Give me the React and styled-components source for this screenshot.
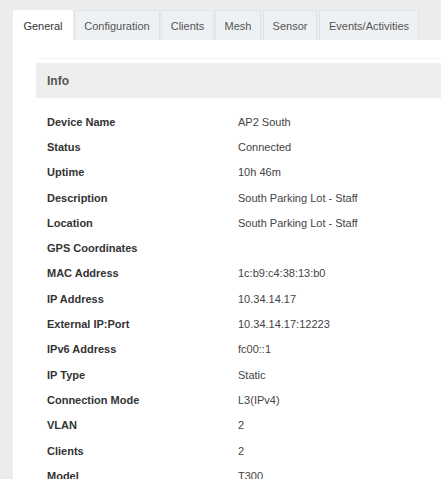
import React from "react";
import styled, { createGlobalStyle } from "styled-components";

const Global = createGlobalStyle`
  html, body { margin: 0; padding: 0; }
  body {
    background: #ececec;
    font-family: "Liberation Sans", Arial, sans-serif;
    overflow: hidden;
  }
`;

const Page = styled.div`
  padding: 10px 0 0 13px;
  height: 479px;
  box-sizing: border-box;
`;

const TabBar = styled.div`
  display: flex;
  gap: 1px;
  height: 30px;
`;

const Tab = styled.div`
  display: flex;
  align-items: center;
  justify-content: center;
  box-sizing: border-box;
  height: 30px;
  width: ${(p) => p.$w}px;
  margin-right: ${(p) => p.$mr || 0}px;
  font-size: 11px;
  color: ${(p) => (p.$active ? "#333" : "#555")};
  background: ${(p) => (p.$active ? "#fff" : "#eef1f3")};
  border: 1px solid ${(p) => (p.$active ? "#fff" : "#dfe3e6")};
  border-bottom: none;
  border-radius: 2px 2px 0 0;
`;

const Panel = styled.div`
  background: #fff;
  padding: 18px 0 0 23px;
  height: 100%;
`;

const Section = styled.div`
  border-top: 1px solid #f4f4f4;
  padding-top: 4px;
`;

const Header = styled.div`
  height: 35px;
  display: flex;
  align-items: center;
  padding-left: 11px;
  background: #eeeeee;
  font-size: 12px;
  font-weight: bold;
  color: #555;
`;

const Rows = styled.div`
  padding: 11px 0 0 11px;
`;

const Row = styled.div`
  display: grid;
  grid-template-columns: 191px 1fr;
  height: 25.3px;
  align-items: center;
  font-size: 11px;
`;

const Label = styled.div`
  font-weight: bold;
  color: #333;
`;

const Value = styled.div`
  color: #444;
`;

const tabs = [
  ["General", 60, true],
  ["Configuration", 86],
  ["Clients", 53],
  ["Mesh", 46, false, 1],
  ["Sensor", 54, false, 1],
  ["Events/Activities", 100],
];

const data = [
  ["Device Name", "AP2 South"],
  ["Status", "Connected"],
  ["Uptime", "10h 46m"],
  ["Description", "South Parking Lot - Staff"],
  ["Location", "South Parking Lot - Staff"],
  ["GPS Coordinates", ""],
  ["MAC Address", "1c:b9:c4:38:13:b0"],
  ["IP Address", "10.34.14.17"],
  ["External IP:Port", "10.34.14.17:12223"],
  ["IPv6 Address", "fc00::1"],
  ["IP Type", "Static"],
  ["Connection Mode", "L3(IPv4)"],
  ["VLAN", "2"],
  ["Clients", "2"],
  ["Model", "T300"],
];

export default function App() {
  return (
    <>
      <Global />
      <Page>
        <TabBar>
          {tabs.map(([t, w, a, mr]) => (
            <Tab key={t} $w={w} $active={a} $mr={mr}>
              {t}
            </Tab>
          ))}
        </TabBar>
        <Panel>
          <Section>
            <Header>Info</Header>
            <Rows>
              {data.map(([l, v]) => (
                <Row key={l}>
                  <Label>{l}</Label>
                  <Value>{v}</Value>
                </Row>
              ))}
            </Rows>
          </Section>
        </Panel>
      </Page>
    </>
  );
}
